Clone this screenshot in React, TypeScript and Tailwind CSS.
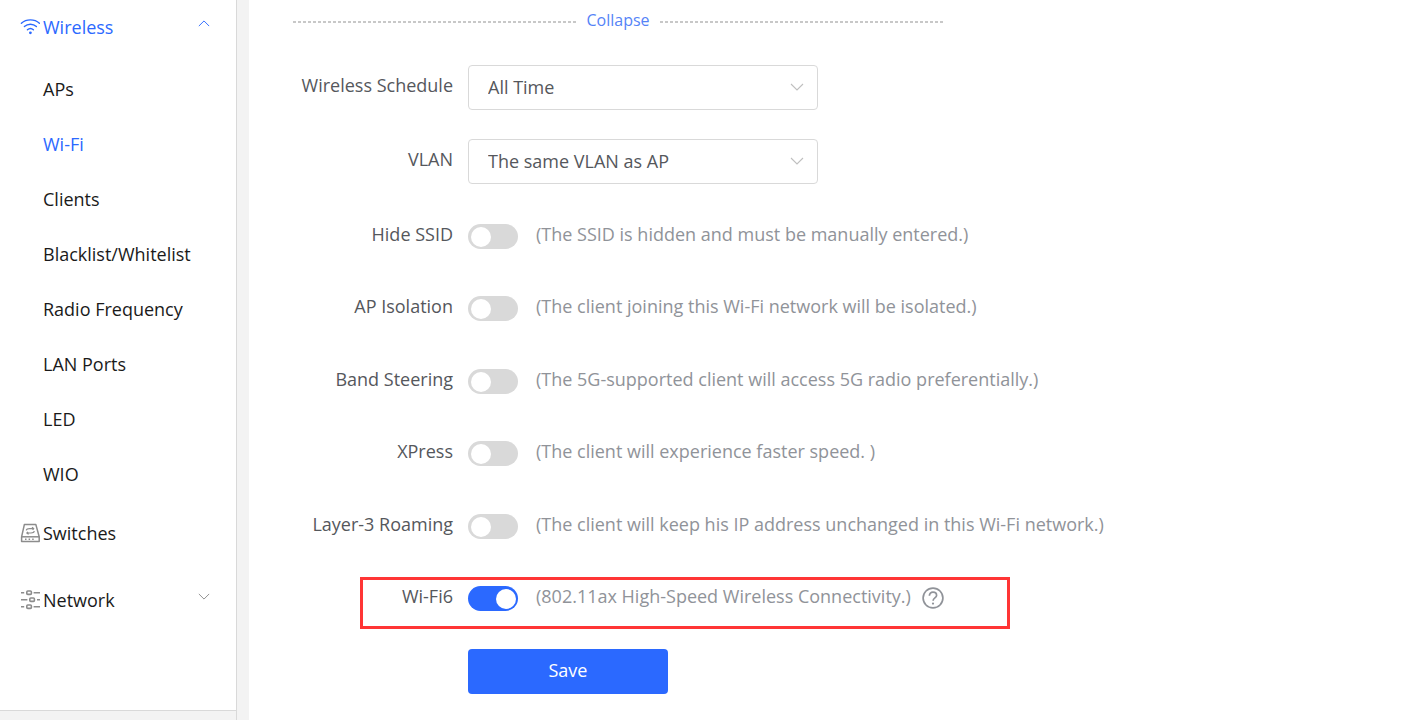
import { useState } from 'react'
import { clsx } from 'clsx'

const wirelessItems = ['APs', 'Wi-Fi', 'Clients', 'Blacklist/Whitelist', 'Radio Frequency', 'LAN Ports', 'LED', 'WIO']

interface SwitchOption {
  id: string
  label: string
  hint: string
  help?: boolean
  highlighted?: boolean
}

const switchOptions: SwitchOption[] = [
  { id: 'hide-ssid', label: 'Hide SSID', hint: '(The SSID is hidden and must be manually entered.)' },
  { id: 'ap-isolation', label: 'AP Isolation', hint: '(The client joining this Wi-Fi network will be isolated.)' },
  { id: 'band-steering', label: 'Band Steering', hint: '(The 5G-supported client will access 5G radio preferentially.)' },
  { id: 'xpress', label: 'XPress', hint: '(The client will experience faster speed. )' },
  { id: 'roaming', label: 'Layer-3 Roaming', hint: '(The client will keep his IP address unchanged in this Wi-Fi network.)' },
  { id: 'wifi6', label: 'Wi-Fi6', hint: '(802.11ax High-Speed Wireless Connectivity.)', help: true, highlighted: true },
]

function WifiIcon() {
  return (
    <svg className="w-5 h-5" viewBox="0 0 20 20" fill="none" stroke="currentColor" strokeWidth="1.4" strokeLinecap="round">
      <path d="M1.4 6.2c5-4.4 13-4.4 18 0" />
      <path d="M4.4 9.6c3.4-3.1 8.6-3.1 12 0" />
      <path d="M7.4 12.8c1.8-1.6 4.2-1.6 6 0" />
      <circle cx="10.4" cy="15.8" r="1.4" fill="currentColor" stroke="none" />
    </svg>
  )
}

function SwitchesIcon() {
  return (
    <svg className="w-5 h-5" viewBox="0 0 20 20" fill="none" stroke="currentColor" strokeWidth="1.5" strokeLinejoin="round">
      <path d="M4.4 1.4h11.4l3.4 12.4v4.6H1.6v-4.6z" />
      <path d="M1.6 13.8h17.6" />
      <path d="M5 16.2h1.5M8.6 16.2h1.5M12.2 16.2h1.5" strokeWidth="1.6" />
      <path d="M6.2 7.4c.4-1.4 1.6-1.8 3.4-1.8h4M12 4.2l1.8 1.4-1.2 1.2" strokeWidth="1.2" />
      <path d="M14.4 8.2c-.4 1.4-1.6 1.8-3.4 1.8H7M8.6 11.4L6.8 10 8 8.8" strokeWidth="1.2" />
    </svg>
  )
}

function NetworkIcon() {
  return (
    <svg className="w-5 h-5" viewBox="0 0 20 20" fill="none" stroke="currentColor" strokeWidth="1.6">
      <rect x="6.8" y="1" width="4.6" height="3.4" rx="1" />
      <rect x="9.8" y="8" width="4.6" height="3.4" rx="1" />
      <rect x="6.8" y="15" width="4.6" height="3.4" rx="1" />
      <path d="M1 2.7h3.2M13.6 2.7H20M1 9.7h6.4M17 9.7h3M1 16.7h3.2M13.6 16.7H20" />
    </svg>
  )
}

function Chevron({ up = false, className }: { up?: boolean; className?: string }) {
  return (
    <svg className={className} viewBox="0 0 14 8" fill="none" stroke="currentColor" strokeWidth="1.1">
      <path d={up ? 'M1 7l6-6 6 6' : 'M1 1l6 6 6-6'} />
    </svg>
  )
}

function Sidebar() {
  const [active, setActive] = useState('Wi-Fi')
  const [open, setOpen] = useState(true)

  return (
    <aside className="w-[237px] shrink-0 flex flex-col border-r border-[#d9d9d9] bg-[#f3f3f3]">
      <nav className="flex-1 bg-white border-b border-[#d9d9d9] text-[#1a1a1a]">
        <button
          type="button"
          onClick={() => setOpen(!open)}
          className="flex items-center w-full h-[54px] pl-5 pr-[26px] gap-[3px] text-[#2b69ff]"
        >
          <WifiIcon />
          <span>Wireless</span>
          <Chevron up={open} className="w-3 h-[7px] ml-auto mb-2" />
        </button>
        {open && (
          <ul className="pt-[7px]">
            {wirelessItems.map((item) => (
              <li key={item}>
                <a
                  href="#"
                  onClick={() => setActive(item)}
                  className={clsx('flex items-center h-[55px] pl-[43px]', active === item && 'text-[#2b69ff]')}
                >
                  {item}
                </a>
              </li>
            ))}
          </ul>
        )}
        <a href="#" className="flex items-center h-16 pl-5 gap-[3px]">
          <span className="text-[#8c8c8c]"><SwitchesIcon /></span>
          Switches
        </a>
        <button type="button" className="flex items-center w-full h-[70px] pl-5 pr-[26px] gap-[3px]">
          <span className="text-[#8c8c8c]"><NetworkIcon /></span>
          <span>Network</span>
          <Chevron className="w-3 h-[7px] ml-auto mb-2 text-[#8c8c8c]" />
        </button>
      </nav>
      <div className="h-[9px]" />
    </aside>
  )
}

function DashedLine() {
  return <div className="flex-1 h-[2px] bg-[repeating-linear-gradient(90deg,#c8c8c8_0_3px,transparent_3px_5px)]" />
}

function SelectRow({ id, label, options }: { id: string; label: string; options: string[] }) {
  return (
    <div className="flex items-start gap-[15px] h-[74px]">
      <label htmlFor={id} className="w-40 shrink-0 text-right leading-10">{label}</label>
      <div className="relative w-[350px]">
        <select
          id={id}
          className="w-full h-[45px] pl-[19px] pr-10 pb-[2px] appearance-none rounded border border-[#d9d9d9] bg-white outline-none"
        >
          {options.map((option) => (
            <option key={option}>{option}</option>
          ))}
        </select>
        <Chevron className="absolute right-[14px] top-[18px] w-[14px] h-2 text-[#bfbfbf] pointer-events-none" />
      </div>
    </div>
  )
}

function SwitchRow({ option, checked, onChange }: { option: SwitchOption; checked: boolean; onChange: () => void }) {
  return (
    <div className="relative flex items-start gap-[15px] odd:h-[72px] even:h-[73px] leading-6">
      {option.highlighted && (
        <div className="absolute left-[67px] -top-[7px] w-[650px] h-[52px] border-3 border-[#ff3535] pointer-events-none" />
      )}
      <label htmlFor={option.id} className="w-40 shrink-0 text-right">{option.label}</label>
      <input
        id={option.id}
        type="checkbox"
        role="switch"
        checked={checked}
        onChange={onChange}
        className="mt-[2px] w-[50px] h-[25px] shrink-0 appearance-none rounded-full bg-[#d9d9d9] p-[2px] pl-[3px] cursor-pointer before:block before:size-5 before:mt-px before:rounded-full before:bg-white before:content-[''] checked:bg-[#2b69ff] checked:before:ml-[25px]"
      />
      <span className="ml-[3px] text-[#909399]">{option.hint}</span>
      {option.help && (
        <button type="button" aria-label="Help" className="-ml-1 mt-[3px] text-[#909399]">
          <svg className="w-[22px] h-[22px]" viewBox="0 0 22 22" fill="none" stroke="currentColor" strokeWidth="1.7">
            <circle cx="11" cy="11" r="9.9" />
            <path d="M7.4 8.7c0-2 1.5-3.6 3.6-3.6s3.6 1.4 3.6 3.3c0 2.4-3.5 2.7-3.5 5.3" />
            <circle cx="11" cy="16.6" r="1.1" fill="currentColor" stroke="none" />
          </svg>
        </button>
      )}
    </div>
  )
}

export default function App() {
  const [enabled, setEnabled] = useState<Record<string, boolean>>({ wifi6: true })

  const toggle = (id: string) => setEnabled({ ...enabled, [id]: !enabled[id] })

  return (
    <div className="flex min-h-screen bg-[#f3f3f3] font-['Open_Sans','Noto_Sans',sans-serif] text-lg">
      <Sidebar />
      <main className="flex-1 ml-3 pl-11 bg-white text-[#55575c]">
        <form onSubmit={(e) => e.preventDefault()}>
          <div className="flex items-center gap-[10px] w-full max-w-[650px] pt-2">
            <DashedLine />
            <button type="button" className="pb-1 text-base leading-6 text-[#5583f7]">Collapse</button>
            <DashedLine />
          </div>

          <div className="pt-[29px]">
            <SelectRow id="schedule" label="Wireless Schedule" options={['All Time', 'Weekdays', 'Weekends']} />
            <SelectRow id="vlan" label="VLAN" options={['The same VLAN as AP', 'Default VLAN']} />
          </div>

          <div className="pt-[9px]">
            {switchOptions.map((option) => (
              <SwitchRow
                key={option.id}
                option={option}
                checked={!!enabled[option.id]}
                onChange={() => toggle(option.id)}
              />
            ))}
          </div>

          <button type="submit" className="block -mt-2 ml-[175px] w-[200px] h-[45px] pb-[3px] rounded bg-[#2b69ff] text-white">
            Save
          </button>
        </form>
      </main>
    </div>
  )
}
